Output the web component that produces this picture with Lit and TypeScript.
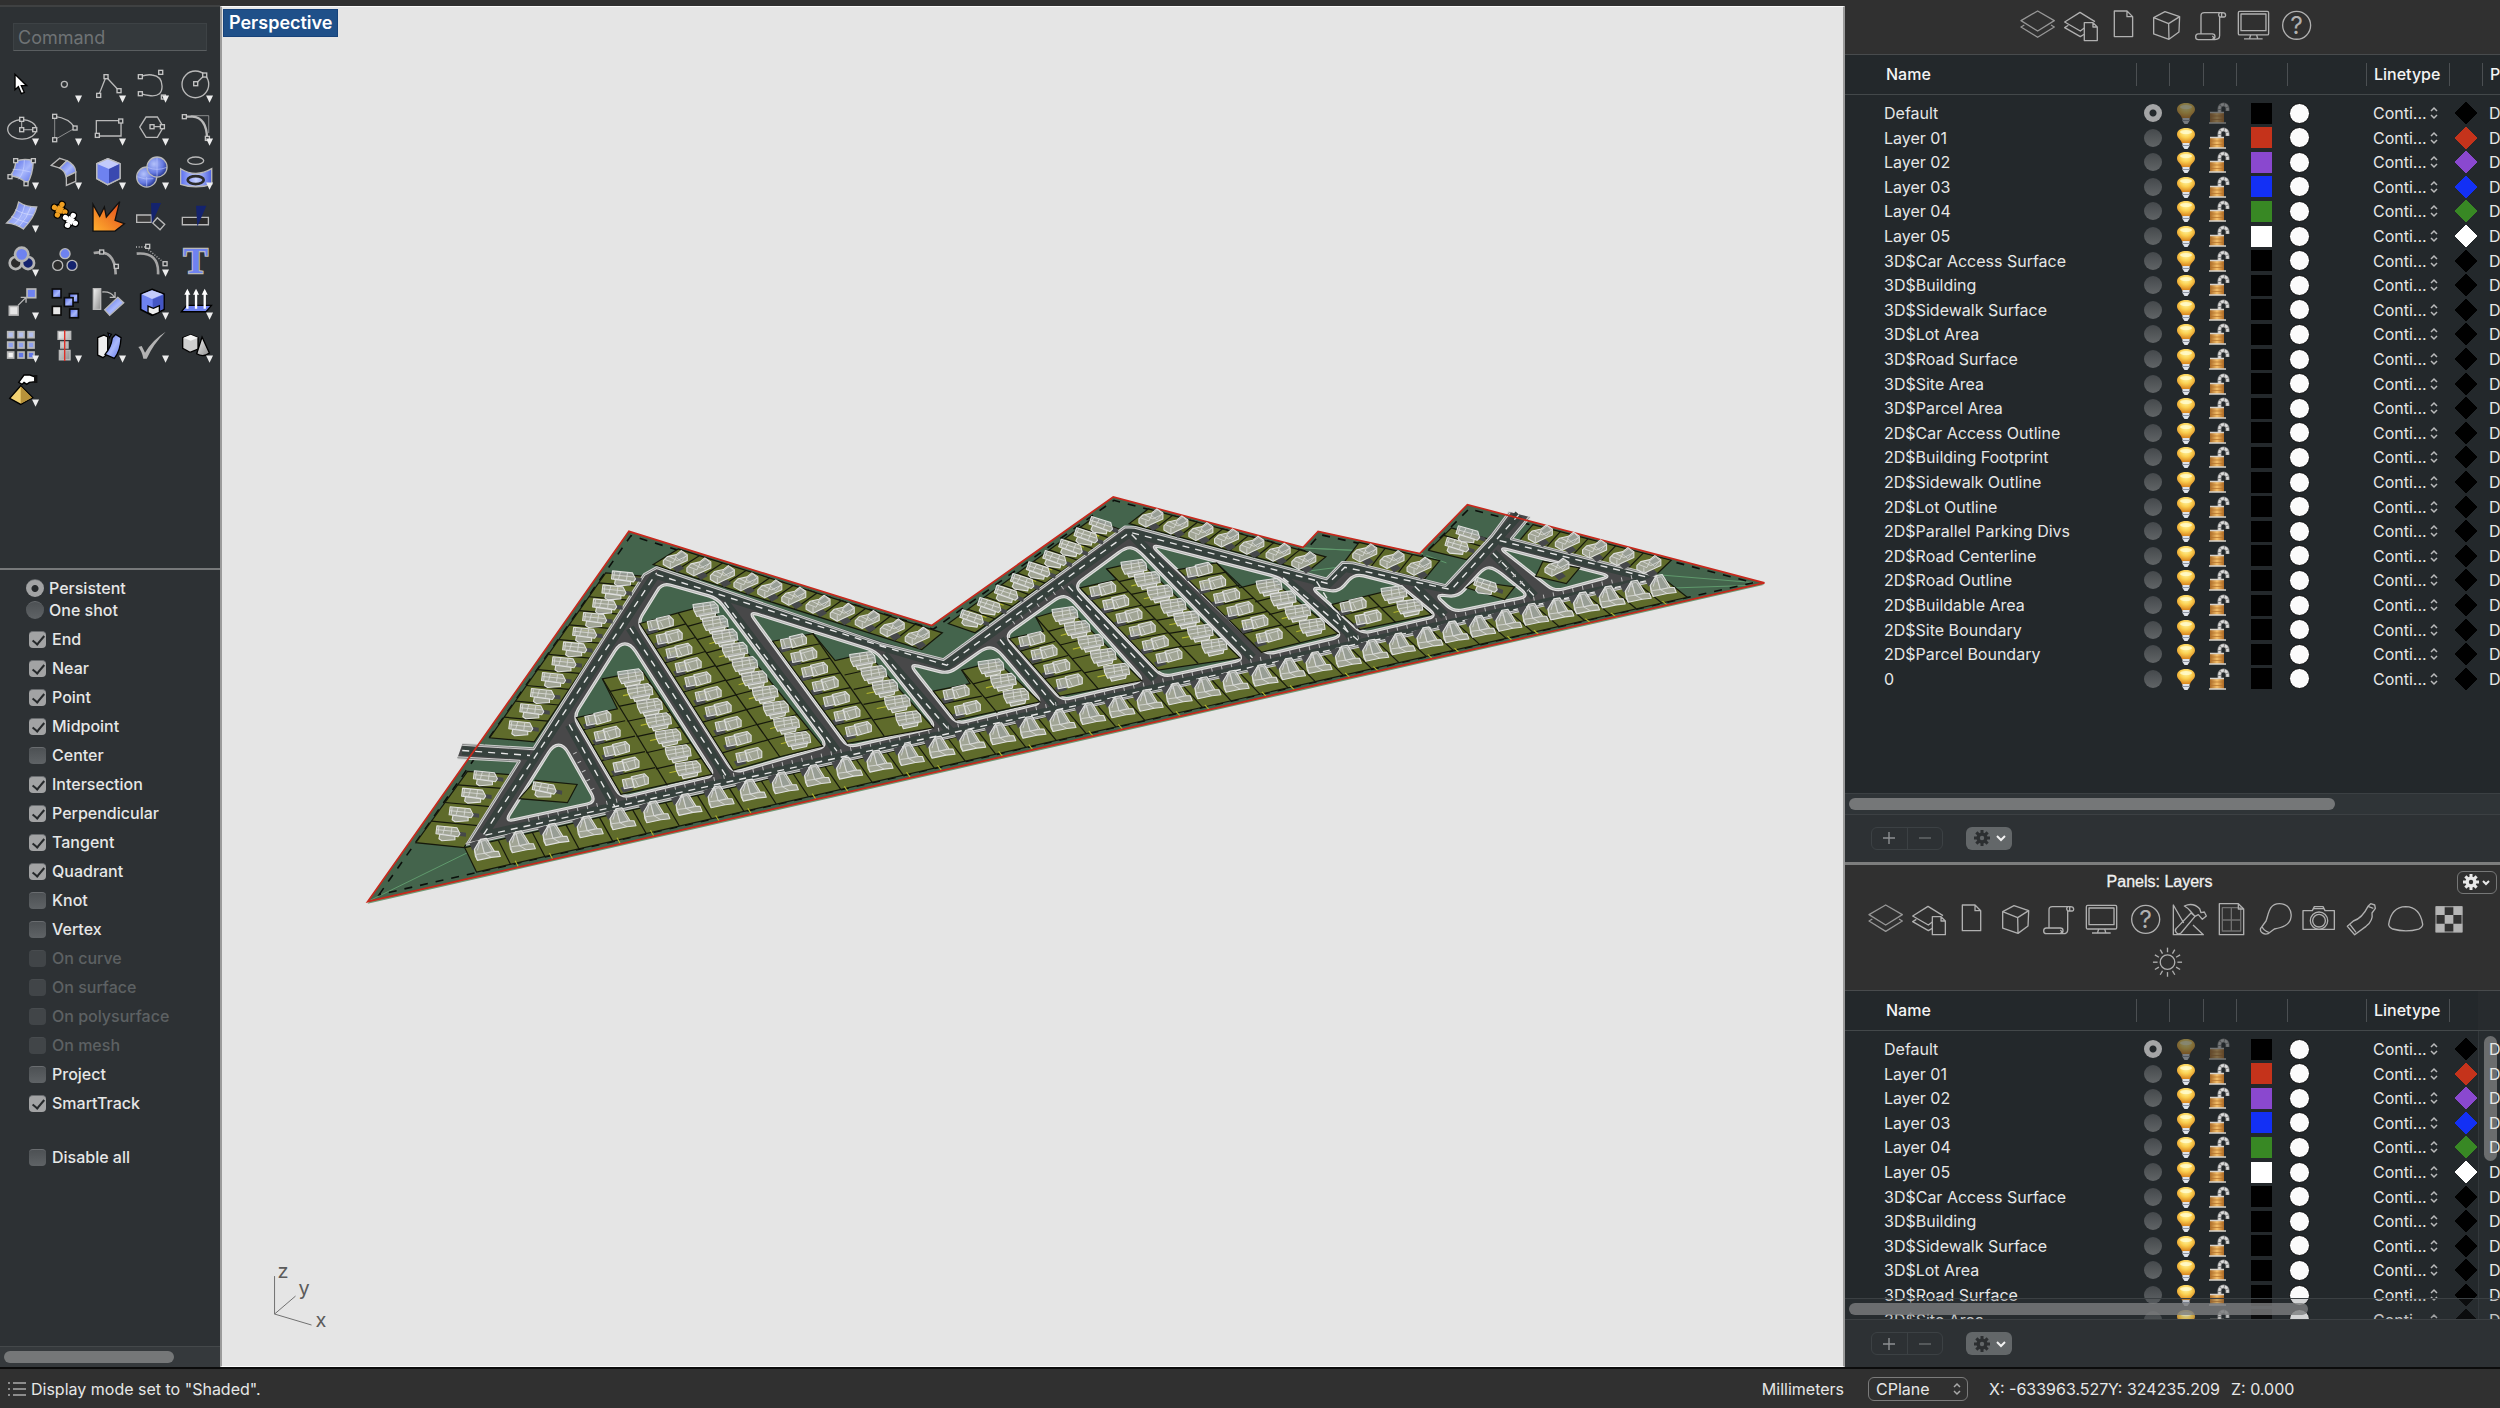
import { LitElement, html, svg, css } from "lit";
import { customElement, property } from "lit/decorators.js";

/* ---------- site plan geometry ---------- */

type Pt = [number, number];

// The plan is surveyed on three sheets, each with its own origin and scale.
const SHEETS: Record<string, [number, number, number, number]> = {
  w: [360, 480, 2.8, 3],
  m: [880, 480, 3, 3],
  e: [1300, 480, 3, 3],
};

function pts(source: string): Pt[] {
  let sheet = SHEETS.w;
  return source.trim().split(/\s+/).map((token) => {
    if (SHEETS[token[0]]) {
      sheet = SHEETS[token[0]];
      token = token.slice(1);
    }
    const [x, y] = token.split(",").map(Number);
    return [sheet[0] + x / sheet[2], sheet[1] + y / sheet[3]] as Pt;
  });
}

const fmt = (p: Pt) => `${p[0].toFixed(1)},${p[1].toFixed(1)}`;
const poly = (source: string) => pts(source).map(fmt).join(" ");

function rounded(source: string, radius: number): string {
  const p = pts(source);
  let d = "";
  p.forEach((cur, i) => {
    const prev = p[(i + p.length - 1) % p.length];
    const next = p[(i + 1) % p.length];
    const toward = (t: Pt): Pt => {
      const len = Math.hypot(t[0] - cur[0], t[1] - cur[1]);
      const k = Math.min(radius, len / 2) / len;
      return [cur[0] + (t[0] - cur[0]) * k, cur[1] + (t[1] - cur[1]) * k];
    };
    d += `${i ? "L" : "M"}${fmt(toward(prev))} Q${fmt(cur)} ${fmt(toward(next))} `;
  });
  return d + "Z";
}

interface Row {
  kind: string;
  at: string;
  edges?: string; // outer start, outer end, inner start, inner end
  turn?: number;
}

const BOUNDARY = "w20,1267 752,155 m155,438 700,52 1270,203 1315,155 e360,222 503,75 1395,310";
const SETBACK = "w52,1246 758,168 m160,449 702,62 1276,214 1320,165 e364,233 508,88 1362,309";
const ROADS =
  "w295,1095 445,845 272,835 285,795 485,808 795,285 830,264 m0,492 190,540 735,142 765,143 1340,298 1388,248 e160,250 438,318 630,97 690,112 635,178 1075,290 1090,298";
const CURBS = [
  "w272,835 445,845 300,1092",
  "w285,795 485,808 795,285 830,264 m0,492 190,540 735,142 765,143 1340,298 1388,248 e160,250 438,318 575,170 630,97",
  "e690,112 635,178 1075,290",
  "w295,1095 e1090,298",
];
const ISLANDS = [
  "w540,797 570,797 660,968 405,1027",
  "w725,493 757,493 993,888 730,955 597,712",
  "w845,310 1000,356 1308,800 1045,880 776,430",
  "w1088,396 1445,516 m168,743 w1365,803",
  "m88,553 205,583 318,503 350,508 487,670 230,733",
  "m375,468 540,350 568,353 793,604 545,662",
  "m583,318 738,203 768,206 1093,540 848,592",
  "m812,195 1200,294 1388,470 1160,525",
  "e33,322 115,338 165,282 300,317 412,410 188,462",
  "e406,345 475,352 555,263 585,266 688,350 462,397",
  "e597,203 935,290 765,335",
];
const LOTS = [
  "w687,280 795,290 487,787 362,775",
  "w300,876 420,886 290,1105 155,1090",
  "w890,208 m187,460 125,510 w820,255",
  "m635,118 722,150 285,460 205,432",
  "m805,88 1338,232 1285,275 748,132",
  "e178,188 420,243 375,298 135,245",
  "e455,145 570,180 500,240 387,212",
  "e700,135 1115,242 1065,290 660,182",
  "w325,1178 e1163,353 1090,295 w292,1105",
  "w490,903 607,915 580,970 445,958",
  "w678,598 790,575 985,885 730,945 605,715 720,688",
  "w890,400 975,375 1295,800 1175,832 1045,872 783,432",
  "w1155,485 1268,462 1330,543 1420,520 m160,745 w1365,792",
  "m160,635 270,612 245,572 350,545 480,667 228,722",
  "m388,477 490,455 468,413 565,385 785,603 540,650",
  "m600,325 710,300 680,268 780,245 1080,535 835,572",
  "m895,270 1010,250 1080,325 1175,300 1375,462 1145,518",
  "e95,375 300,325 395,405 180,450",
  "e525,305 645,322 615,360 500,325",
  "e730,245 840,265 800,312 708,290",
];
const PARTITIONS = [
  "w678,598 860,918", "w890,400 1175,832", "w1268,462 m12,770", "m245,572 352,700",
  "m468,413 655,628", "m680,268 955,552", "m1010,250 1262,490", "e205,347 287,428",
];
const ROWS: Row[] = [
  { kind: "slab", at: "w737,295 710,337 684,379 656,420 628,464 600,508 570,553 541,600 510,648 480,694 449,745", edges: "w687,280 362,775 795,290 487,787" },
  { kind: "slab", at: "w350,895 317,947 282,1003 245,1060", edges: "w300,876 155,1090 420,886 290,1105" },
  { kind: "villa", at: "w882,240 948,262 1014,285 1080,307 1147,328 1214,350 1282,374 1350,398 1420,420 1490,445 1560,470", edges: "w890,208 m187,460 w820,255 m125,510" },
  { kind: "slab", turn: 12, at: "m663,138 618,172 572,206 524,240 475,274 427,309 379,344 328,381 275,418", edges: "m635,118 205,432 722,150 285,460" },
  { kind: "villa", at: "m813,115 888,136 963,156 1040,175 1116,197 1195,218 1272,243", edges: "m805,88 1338,232 748,132 1285,275" },
  { kind: "villa", at: "e195,220 277,240 358,260", edges: "e178,188 420,243 135,245 375,298" },
  { kind: "slab", turn: 10, at: "e505,165 472,200", edges: "e455,145 387,212 570,180 500,240" },
  { kind: "villa", at: "e722,163 803,185 885,208 967,231 1048,255", edges: "e700,135 1115,242 660,182 1065,290" },
  { kind: "gable", at: "w350,1110 448,1087 542,1065 638,1042 730,1018 825,997 915,975 1005,952 1095,932 1185,910 1275,888 1365,866 1450,845 m88,825 180,803 272,782 362,763 453,743 543,723 632,702 720,682 805,662 892,643 978,625 1063,605 1150,587 1232,568 e52,549 140,530 222,512 302,493 385,475 463,457 543,440 622,422 702,404 778,388 855,370 932,352 1010,335 1085,318", edges: "w325,1178 e1163,353 w292,1105 e1090,295" },
  { kind: "slab", at: "w515,930", turn: 4 },
  { kind: "wide", at: "w757,592 783,636 810,680 835,724 862,772 890,820 918,868", edges: "w678,598 855,918 790,575 985,885" },
  { kind: "step", at: "w665,717 691,764 717,810 744,857 770,907", edges: "w605,715 730,945 720,688 858,918" },
  { kind: "wide", at: "w968,390 994,432 1021,472 1049,512 1077,555 1104,598 1134,642 1164,688 1194,734 1225,780", edges: "w890,400 1175,832 975,375 1295,800" },
  { kind: "step", at: "w840,432 865,473 892,515 918,558 945,601 974,645 1002,690 1030,735 1058,780 1088,828", edges: "w783,432 1045,872 890,400 1175,832" },
  { kind: "step", at: "w1213,487 1242,528 1272,572 1302,615 1333,660 1363,704 1395,750", edges: "w1155,485 1365,792 1268,462 m12,770" },
  { kind: "wide", at: "w1407,540 1438,582 1470,624 m52,670 85,718", edges: "w1330,543 m12,770 w1420,520 m160,745" },
  { kind: "step", at: "m228,640 262,687", edges: "m160,635 228,722 270,612 352,700" },
  { kind: "wide", at: "m333,562 370,605 408,650", edges: "m245,572 352,700 350,545 480,667" },
  { kind: "step", at: "m455,480 492,520 530,563 568,607", edges: "m388,477 540,650 490,445 655,628" },
  { kind: "wide", at: "m555,405 592,447 632,488 670,530 710,575", edges: "m468,413 655,628 565,385 785,603" },
  { kind: "step", at: "m668,330 707,370 747,410 787,450 826,492 867,530", edges: "m600,325 835,572 710,300 955,552" },
  { kind: "wide", at: "m762,263 802,300 840,340 880,380 920,418 961,458 1003,500", edges: "m680,268 955,552 780,245 1080,535" },
  { kind: "step", at: "m958,272 998,312 1040,350 1080,390 1125,430 1168,470", edges: "m895,270 1145,518 1010,250 1262,490" },
  { kind: "wide", at: "m1168,320 1210,358 1254,398 1297,440", edges: "m1080,325 1262,490 1175,300 1375,462" },
  { kind: "step", at: "e160,377 205,415", edges: "e95,375 180,450 205,347 287,428" },
  { kind: "wide", at: "e283,342 330,382", edges: "e205,347 287,428 300,325 395,405" },
  { kind: "slab", turn: 12, at: "e558,320" },
  { kind: "villa", at: "e772,263" },
];
const CENTERLINES = [
  "w345,1065 830,280", "w285,813 475,828", "w830,285 m5,500 200,557 750,158 1345,312 1395,263 e455,330 658,105",
  "e600,183 1060,297", "w350,1067 e1060,299", "w585,735 712,980", "w755,445 1028,895", "w1020,368 1335,815",
  "w1465,525 m210,755", "m360,480 525,680", "m565,320 825,598", "m755,165 1118,535", "m1210,295 1435,482",
  "e50,305 155,475", "e345,320 435,408", "e580,220 705,350",
];
const GUIDES = ["w20,1267 300,1120", "w430,1035 1500,570", "e1080,286 1362,309", "e1130,325 1340,318", "m1265,205 1440,213", "m1200,285 1440,255", "m380,470 620,370", "e5,205 370,222", "e380,228 440,250"];

function dividers(row: Row) {
  if (!row.edges) return [];
  const [p0, p1, q0, q1] = pts(row.edges);
  const c0 = [(p0[0] + q0[0]) / 2, (p0[1] + q0[1]) / 2];
  const c1 = [(p1[0] + q1[0]) / 2, (p1[1] + q1[1]) / 2];
  const dx = c1[0] - c0[0];
  const dy = c1[1] - c0[1];
  const at = pts(row.at);
  const lerp = (a: Pt, b: Pt, t: number): Pt => [a[0] + (b[0] - a[0]) * t, a[1] + (b[1] - a[1]) * t];
  return at.slice(1).map((b, i) => {
    const a = at[i];
    const t = (((a[0] + b[0]) / 2 - c0[0]) * dx + ((a[1] + b[1]) / 2 - c0[1]) * dy) / (dx * dx + dy * dy);
    return [lerp(p0, p1, t), lerp(q0, q1, t)];
  });
}

const houseDefs = svg`
  <g id="slab" class="house">
    <path class="pave" d="M11-1l7 1v4l-8-1z"/>
    <path d="M-8 1l-1 5 3 2 13-1v-4z"/>
    <path d="M-11-7l20 2 3 6-2 3-22-3z"/>
    <path class="ridge" d="M-11-3l21 2M-9-6l-1 7M-3-6l-2 7M4-5l-1 7"/>
  </g>
  <g id="villa" class="house">
    <path class="pave" d="M-3 8l8-3 4 4-7 4z"/>
    <path d="M-12 1l4-4 9-2 5-4 6 4v6L1 6l-6 3-7-4z"/>
    <path class="roof" d="M0-3l7-5 4 4-5 6z"/>
    <path class="ridge" d="M-10 0l8 3M-6-3l8 4 10-5M-5 3v5M-2 3l3-6"/>
  </g>
  <g id="gable" class="house">
    <path class="pave" d="M-16-6l8-3 3 6-8 4z"/>
    <path d="M-11 0L-5-10 1-11 9 2 13 2 15 7 6 8-8 11-10 7z"/>
    <path class="roof" d="M-4-8L0-9 7 2-1 4z"/>
    <path class="ridge" d="M-5-10L-1 4 9 2M-11 0L-8 11M-9 5L-1 4 6 8M-5-10L-8 1"/>
  </g>
  <g id="wide" class="house">
    <path d="M-7 5l2 5 14-3 1-5z"/>
    <path d="M-13-5l21-3 4 4 1 7-22 4-3-6z"/>
    <path class="ridge" d="M-12-2L9-5M-11 2l22-4M-3-6l1 9M4-7l2 9"/>
  </g>
  <g id="step" class="house">
    <path class="pave" d="M-15 6l10-3 3 5-10 3z"/>
    <path d="M-13-2l10-2 2 9-10 2z"/>
    <path d="M-4-5L9-8l4 4v6L-1 6z"/>
    <path class="ridge" d="M-3-2l14-4M-10-2l2 7M0-2l3 6M8-7l2 10"/>
  </g>`;

@customElement("site-view")
export class SiteView extends LitElement {
  static styles = css`
    :host { display: block; min-width: 0; min-height: 0; overflow: hidden; }
    .plan { display: block; width: 100%; height: 100%; }
    .axis { font: 20px Inter, "Liberation Sans", sans-serif; fill: #5b5b5b; }
    .house path { fill: rgba(178, 180, 176, 0.8); stroke: #e0e1df; stroke-width: 1.1; stroke-linejoin: round; }
    .house .ridge { fill: none; stroke: #dcdddb; stroke-width: 0.8; }
    .house .roof { fill: #989e95; stroke: #d0d1cf; stroke-width: 0.8; }
    .house .pave { fill: #46484a; stroke: none; }
  `;
  render() {
    const lines = ROWS.flatMap(dividers);
    return html`<svg class="plan" viewBox="223 7 1619 1360" preserveAspectRatio="xMidYMid meet" role="img" aria-label="Perspective">
      <defs>${houseDefs}</defs>
      <polygon points=${poly(BOUNDARY)} transform="translate(0 2)" fill="#6f9a75"/>
      <polygon points=${poly(BOUNDARY)} fill="#44644c"/>
      <g fill="none" stroke="#5f9a6c" stroke-width="1">${GUIDES.map((g) => svg`<polyline points=${poly(g)}/>`)}</g>
      <polygon points=${poly(SETBACK)} fill="none" stroke="#0b0f0b" stroke-width="1.6" stroke-dasharray="8 8"/>
      <polygon points=${poly(ROADS)} fill="#484849"/>
      <g fill="none" stroke="#36413d" stroke-width="9">${CENTERLINES.map((c) => svg`<polyline points=${poly(c)}/>`)}</g>
      ${ISLANDS.map((i) => svg`<path d=${rounded(i, 9)} fill="#44644c" stroke="#dededd" stroke-width="3.2"/><path d=${rounded(i, 9)} fill="none" stroke="#a9aaa9" stroke-width="0.8"/>`)}
      <g fill="#5f6b2b" stroke="#15180c" stroke-width="1.2">${LOTS.map((l) => svg`<polygon points=${poly(l)}/>`)}</g>
      <g fill="none" stroke="#15180c" stroke-width="1.2">
        ${PARTITIONS.map((p) => svg`<polyline points=${poly(p)}/>`)}
        ${lines.map(([a, b]) => svg`<path d="M${fmt(a)} L${fmt(b)}"/>`)}
      </g>
      <g stroke="#b3b52e" stroke-width="1.1">
        ${lines.filter((_, i) => i % 3 !== 1).map(([a, b]) => svg`<path transform="translate(9 5)" d="M${fmt([a[0] * 0.65 + b[0] * 0.35, a[1] * 0.65 + b[1] * 0.35])} L${fmt([a[0] * 0.9 + b[0] * 0.1, a[1] * 0.9 + b[1] * 0.1])}"/>`)}
      </g>
      <g fill="none" stroke-linejoin="round">
        ${CURBS.map((c) => svg`<polyline points=${poly(c)} stroke="#d0d1d0" stroke-width="2.8"/><polyline points=${poly(c)} stroke="#858686" stroke-width="1"/>`)}
      </g>
      <g fill="none" stroke="#e6e6e6" stroke-width="1.4" stroke-dasharray="7 6">${CENTERLINES.map((c) => svg`<polyline points=${poly(c)}/>`)}</g>
      <g fill="none" stroke="#bcbcbc" stroke-width="4" stroke-dasharray="1 9">
        <polyline points=${poly("w470,1022 e1000,292")}/>
        <polyline points=${poly("w600,820 660,950")}/>
        <polyline points=${poly("e600,245 690,335")}/>
        <polyline points=${poly("m400,430 560,315")}/>
      </g>
      <polygon points=${poly(BOUNDARY)} fill="none" stroke="#c8281c" stroke-width="1.7"/>
      ${ROWS.map((r) => pts(r.at).map((p) => svg`<use href="#${r.kind}" transform="translate(${fmt(p)}) rotate(${r.turn ?? 0})"/>`))}
      <path d="M274 1277v38l37 11M274 1315l21-18" fill="none" stroke="#707070"/>
      <text class="axis" x="277" y="1279">z</text>
      <text class="axis" x="298" y="1296">y</text>
      <text class="axis" x="315" y="1328">x</text>
    </svg>`;
  }
}

/* ---------- modelling tool palette ---------- */

const grip = (x: number, y: number) => svg`<rect x=${x - 6} y=${y - 6} width="12" height="12" fill="#2d3134" stroke="#c4c4c4" stroke-width="4"/>`;
const tile = (x: number, y: number, fill: string, edge = "#b9b9b9", s = 26) =>
  svg`<rect x=${x - s / 2} y=${y - s / 2} width=${s} height=${s} fill=${fill} stroke=${edge} stroke-width="5"/>`;

// A jigsaw piece: the black silhouette first, then the coloured body on top.
const lobes = () => svg`<rect x="-10" y="-10" width="20" height="20"/><circle cx="-17" r="8"/><circle cx="17" r="8"/><circle cy="-17" r="8"/><circle cy="17" r="8"/>`;
const jigsaw = (place: string, fill: string) => svg`<g transform=${place}>
  <g fill="#000" stroke="#000" stroke-width="7">${lobes()}</g>
  <g fill=${fill} stroke="none">${lobes()}</g></g>`;

interface Tool { label: string; more?: boolean; art: unknown; }
const TOOLS: Tool[] = [
  { label: "Select", art: svg`<path d="M45 34V80l10-9 9 21 9-4-9-20h16z" fill="#fff" stroke="#000" stroke-width="4"/>` },
  { label: "Point", more: true, art: svg`<circle cx="64" cy="64" r="9"/>` },
  { label: "Polyline", more: true, art: svg`<path d="M35 97L57 41l39 42"/>${grip(35, 97)}${grip(57, 41)}${grip(96, 83)}` },
  { label: "Curve", more: true, art: svg`<path d="M31 40Q54 33 66 36C84 38 96 50 96 70S86 100 62 98Q45 97 31 92"/>${grip(31, 41)}${grip(92, 28)}${grip(31, 92)}${grip(100, 102)}` },
  { label: "Circle", more: true, art: svg`<circle cx="64" cy="64" r="40"/><path d="M65 62l27-26"/>${grip(65, 62)}${grip(92, 36)}` },
  { label: "Ellipse", more: true, art: svg`<ellipse cx="66" cy="70" rx="43" ry="29"/><path d="M65 40v31h39" stroke-width="3"/>${grip(65, 40)}${grip(65, 71)}${grip(104, 71)}` },
  { label: "Arc", more: true, art: svg`<path d="M35 31Q78 36 96 66"/><path d="M96 66L35 101V31" stroke-width="2"/>${grip(35, 31)}${grip(96, 66)}${grip(35, 101)}` },
  { label: "Rectangle", more: true, art: svg`<path d="M28 44h74v46H28z"/>${grip(31, 88)}${grip(101, 45)}` },
  { label: "Polygon", more: true, art: svg`<path d="M29 63l19-30h34l18 30-18 31H48zM66 62h31"/>${grip(66, 62)}${grip(97, 62)}` },
  { label: "Fillet", more: true, art: svg`<path d="M50 29h54v52" stroke-width="2"/><path d="M31 32H55C85 34 98 55 99 97" stroke-width="7"/>${grip(31, 32)}${grip(100, 97)}` },
  { label: "Surface", more: true, art: svg`<path d="M47 34Q70 24 100 32Q98 75 82 100Q55 78 30 78Q46 60 47 34z" fill="url(#blue)"/><path d="M38 58q26 0 54 8M73 30q0 40-18 58" stroke="#c9d2ff" stroke-width="2"/>${grip(47, 32)}${grip(100, 32)}${grip(30, 80)}${grip(78, 101)}` },
  { label: "Sweep", more: true, art: svg`<path d="M25 46L50 25l22 7-22 22z" fill="#2d2d2d"/><path d="M50 54l22-22Q98 45 98 66L69 80Q66 62 50 54z" fill="url(#blue)"/><path d="M98 66v28L70 106V80z" fill="#2d2d2d"/>` },
  { label: "Box", more: true, art: svg`<path d="M62 26l37 15v45l-37 18-33-18V41z" fill="#6e82f0"/><path d="M62 26l37 15-33 16-37-16z" fill="#c3cbfb" stroke="none"/><path d="M66 57l33-16v45l-33 17z" fill="#3a49b0" stroke="none"/><path d="M62 26l37 15v45l-37 18-33-18V41z"/>` },
  { label: "Sphere", more: true, art: svg`<circle cx="50" cy="81" r="30" fill="url(#ball)"/><circle cx="81" cy="51" r="30" fill="url(#ball)"/><path d="M81 22v58M52 52q29 12 58 0M50 81v29M22 80q22 10 48 6" stroke="#b8c4ff" stroke-width="2"/>` },
  { label: "Revolve", more: true, art: svg`<ellipse cx="65" cy="32" rx="24" ry="11"/><path d="M20 56Q65 84 113 56V103Q65 118 20 103z" fill="url(#blueh)"/><ellipse cx="65" cy="90" rx="24" ry="12" stroke="#2b2b2b" stroke-width="8"/>` },
  { label: "Deform", more: true, art: svg`<path d="M56 27Q78 42 110 42Q104 70 70 108Q48 92 20 90Q48 65 56 27z" fill="url(#blue)"/><path d="M46 50q24 14 54 16M34 70q22 12 50 20M74 36q-8 38-32 58M92 42q-10 32-36 60" stroke="#d4dcff" stroke-width="2"/>` },
  { label: "Join", art: svg`${jigsaw("translate(50 50) rotate(24)", "#f0a022")}${jigsaw("translate(82 82) rotate(30)", "#fff")}` },
  { label: "Explode", art: svg`<path d="M18 114V34L38 70 52 42 58 72 98 26 84 82 112 92 84 114z" fill="url(#fire)" stroke="#111" stroke-width="4"/>` },
  { label: "Trim", art: svg`<path d="M20 66h44v22H20z" fill="#3a3a3a"/><path d="M82 74l22 20-14 16-22-20z"/><path d="M63 30h30L65 92z" fill="#14236e" stroke="none"/>` },
  { label: "Split", art: svg`<path d="M25 73h78v22H25z" fill="#2b2b2b"/><path d="M66 38h31L70 100z" fill="#14236e" stroke="none"/>` },
  { label: "Group", more: true, art: svg`<g stroke="#b4b4b4" stroke-width="8"><circle cx="47" cy="78" r="18" fill="#2b2b2b"/><circle cx="84" cy="78" r="18" fill="#14236e"/><circle cx="65" cy="52" r="20" fill="#6e82f0"/></g>` },
  { label: "Ungroup", art: svg`<circle cx="66" cy="50" r="15" fill="#6e82f0"/><circle cx="44" cy="85" r="15" fill="#2b2b2b"/><circle cx="87" cy="85" r="15" fill="#14236e"/>` },
  { label: "Edit points", art: svg`<path d="M20 48Q84 34 86 112" stroke-width="8" stroke="#a5a5a5"/>${grip(44, 45)}${grip(88, 88)}` },
  { label: "Control points", more: true, art: svg`<path d="M20 50Q88 44 84 112" stroke-width="8" stroke="#a5a5a5"/><path d="M18 30h28l52 44" stroke-dasharray="3 5"/>${grip(53, 28)}${grip(105, 80)}` },
  { label: "Text", art: svg`<text x="65" y="108" text-anchor="middle" class="serif" fill="#6e82f0" stroke="#b9b9b9" stroke-width="7" paint-order="stroke">T</text>` },
  { label: "Move", more: true, art: svg`<path d="M54 76L78 52M62 52h16v16"/>${tile(41, 92, "#e6e6e6")}${tile(94, 40, "#6e82f0")}` },
  { label: "Copy", art: svg`${tile(41, 40, "url(#blue)", "#0b0b0b")}${tile(92, 54, "url(#blue)", "#0b0b0b")}${tile(77, 66, "url(#blue)", "#0b0b0b")}${tile(41, 92, "#e6e6e6", "#0b0b0b")}${tile(93, 100, "url(#blue)", "#0b0b0b")}` },
  { label: "Rotate", art: svg`<path d="M19 26h22v62H19z" fill="url(#grey)"/><path d="M46 36Q72 34 82 52M84 36v16H68"/><path d="M92 52l18 16-42 38-15-17z" fill="url(#blue)"/>` },
  { label: "Solid tools", more: true, art: svg`<path d="M66 28l36 14v46l-36 18-34-18V42z" fill="#6e82f0" stroke="#000" stroke-width="5"/><path d="M66 31l33 12-33 14-31-14z" fill="#c3cbfb" stroke="none"/><path d="M68 58l32-14v42l-32 16z" fill="#4456c4" stroke="none"/><path d="M54 78l16 7 18-8v20l-20 8-14-7z" fill="#eee" stroke="#000" stroke-width="4"/>` },
  { label: "Project", more: true, art: svg`<path d="M38 76h74l-16 19H22z" fill="#6e82f0" stroke="#000" stroke-width="4"/><path d="M40 86V34M66 86V34M92 86V34" stroke="#fff" stroke-width="7"/><path d="M40 26l9 18H31zM66 26l9 18H57zM92 26l9 18H83z" fill="#fff" stroke="none"/>` },
  { label: "Array", more: true, art: svg`${[32, 63, 93].map((x, i) => [35, 66, 96].map((y, j) => tile(x, y, i === 0 && j === 2 ? "#f3f3f3" : j === 0 ? "#b3bfee" : j === 1 ? "#8ea0ee" : "#6278e8", "#b9b9b9", 18)))}` },
  { label: "Align", more: true, art: svg`<path d="M45 25h38v24H45zM53 57h22v18H53zM49 82h32v28H49z" fill="url(#grey)"/><path d="M65 22v92" stroke="#e02a22" stroke-width="4"/>` },
  { label: "Bend", more: true, art: svg`<path d="M32 44l18-8 12 6v50l-14 12-16-8z" fill="#eee" stroke="#000" stroke-width="4"/><path d="M63 30l10 4-6 10zM76 44l10-10 16 10q-2 40-20 62l-28-12q18-20 22-50z" fill="url(#blue)" stroke="#000" stroke-width="4"/>` },
  { label: "Check", more: true, art: svg`<path d="M25 72l10-3 10 20Q68 50 107 26Q70 62 50 107H40Q36 85 25 72z" fill="#b3b3b3" stroke="none"/>` },
  { label: "Mesh", more: true, art: svg`<path d="M50 35l22 9v34l-24 10-22-12V44z" fill="#cfcfcf" stroke="#000" stroke-width="4"/><path d="M28 44l22-9 22 9-22 9z" fill="#f5f5f5" stroke="none"/><path d="M84 42l22 48q-18 14-38 2z" fill="url(#grey)" stroke="#000" stroke-width="4"/>` },
  { label: "Render", more: true, art: svg`<path d="M56 46l16-22h18l16 6v14l-18 2-8 6-8-6-6 6z" fill="#fff" stroke="#000" stroke-width="4"/><path d="M102 24h10v24h-10z" fill="#111" stroke="none"/><path d="M62 56l36 36-36 20-33-18z" fill="#f2d272" stroke="#000" stroke-width="4"/><path d="M62 58l34 34-34 18z" fill="#b8923a" stroke="none"/>` },
];

@customElement("tool-palette")
export class ToolPalette extends LitElement {
  static styles = css`
    :host { display: block; }
    .grid { display: grid; grid-template-columns: repeat(5, 1fr); width: 217px; }
    .tool { padding: 0; border: 0; background: none; line-height: 0; }
    .art { display: block; width: 100%; fill: none; stroke: #b9b9b9; stroke-width: 4; }
    .serif { font: bold 110px "Liberation Serif", serif; }
  `;
  render() {
    return html`
      <div class="grid">
        ${TOOLS.map((t) => html`<button class="tool" aria-label=${t.label}>
          <svg class="art" viewBox="0 0 130 130">
            <defs>
              <linearGradient id="blue" x1="0" y1="0" x2="1" y2="1"><stop offset="0" stop-color="#4f66e6"/><stop offset=".55" stop-color="#a9b8fb"/><stop offset="1" stop-color="#5a70ea"/></linearGradient>
              <linearGradient id="blueh"><stop offset="0" stop-color="#5a6ef0"/><stop offset=".5" stop-color="#c7d2ff"/><stop offset="1" stop-color="#4a5ee0"/></linearGradient>
              <radialGradient id="ball" cx=".35" cy=".35" r=".75"><stop offset="0" stop-color="#b4c2fb"/><stop offset=".6" stop-color="#6478e0"/><stop offset="1" stop-color="#16267a"/></radialGradient>
              <linearGradient id="fire" x1="0" y1="1" x2="1" y2="0"><stop offset="0" stop-color="#ffb02e"/><stop offset="1" stop-color="#e0431a"/></linearGradient>
              <linearGradient id="grey" x1="0" y1="0" x2="1" y2="1"><stop offset="0" stop-color="#f4f4f4"/><stop offset="1" stop-color="#8d8d8d"/></linearGradient>
            </defs>
            ${t.art}
            ${t.more ? svg`<path d="M96 97h21l-10.500 22z" fill="#ececec" stroke="none"/>` : null}
          </svg>
        </button>`)}
      </div>`;
  }
}

/* ---------- layer table ---------- */

const LAYERS: [string, string][] = [
  ["Default", "#000000"], ["Layer 01", "#c5331b"], ["Layer 02", "#8a48cf"], ["Layer 03", "#1330f5"],
  ["Layer 04", "#388824"], ["Layer 05", "#ffffff"],
  ...[
    "3D$Car Access Surface", "3D$Building", "3D$Sidewalk Surface", "3D$Lot Area", "3D$Road Surface",
    "3D$Site Area", "3D$Parcel Area", "2D$Car Access Outline", "2D$Building Footprint",
    "2D$Sidewalk Outline", "2D$Lot Outline", "2D$Parallel Parking Divs", "2D$Road Centerline",
    "2D$Road Outline", "2D$Buildable Area", "2D$Site Boundary", "2D$Parcel Boundary", "0",
  ].map((n): [string, string] => [n, "#000000"]),
];

@customElement("layer-table")
export class LayerTable extends LitElement {
  @property({ type: Boolean }) tall = false;
  @property({ type: Number }) rows = LAYERS.length;
  static styles = css`
    :host { display: flex; flex-direction: column; flex: 1; min-height: 0; overflow: hidden; position: relative; z-index: 0; background: #23282b; font: 16px/20px Inter, "Liberation Sans", sans-serif; color: #e6e7e7; }
    table { border-collapse: collapse; table-layout: fixed; width: 100%; }
    .c-name { width: 291px; } .c-a { width: 33px; } .c-b { width: 34px; } .c-color { width: 51px; } .c-mat { width: 79px; } .c-line { width: 83px; }
    th { position: relative; height: 39px; padding: 0; text-align: left; font-weight: 500; color: #f4f4f4; white-space: nowrap; }
    thead { border-bottom: 1px solid #43484a; }
    th.name { padding-left: 41px; }
    th.pad { padding-left: 8px; }
    th + th::before { content: ""; position: absolute; left: 0; top: 8px; bottom: 8px; width: 1px; background: #4b4f52; }
    .gap td { height: 6px; }
    td { padding: 0; overflow: visible; white-space: nowrap; vertical-align: middle; }
    .row td { height: 25px; }
    .row:nth-child(5n + 2) td, .row:nth-child(5n + 4) td { height: 24px; }
    td.name { padding-left: 39px; }
    .cell { display: flex; justify-content: center; align-items: center; height: 20px; }
    .cell.swatch { justify-content: flex-start; padding-left: 15px; }
    .cell.mat { justify-content: flex-start; padding-left: 2px; }
    .cell.lock { padding-right: 2px; }
    .pick { appearance: none; width: 18px; height: 18px; margin: 0; border-radius: 50%; background: linear-gradient(#45494c, #606466); }
    .pick:checked { background: radial-gradient(circle, #23282b 0 3px, #a4a5a6 4px); }
    .icon { padding: 0; border: 0; background: none; line-height: 0; }
    .dim { opacity: 0.45; }
    .chip { width: 21px; height: 21px; padding: 0; border: 0; }
    .dot { width: 21px; height: 21px; padding: 0; border: 1px solid #0b0c0d; border-radius: 50%; background: #fbfbfb; }
    .line { display: grid; align-items: center; width: 68px; margin-left: 7px; height: 20px; }
    .line > * { grid-area: 1 / 1; }
    .line select { appearance: none; border: 0; padding: 0; margin: 0; background: none; color: inherit; font: inherit; width: 100%; }
    .line svg { justify-self: end; pointer-events: none; margin-right: 3px; }
    td.print { padding-left: 7px; }
    .scroller { position: absolute; z-index: -1; right: 0; top: 40px; bottom: 0; width: 21px; background: #272c2f; border-left: 1px solid #33383b; }
    .vthumb { width: 13px; height: 125px; margin: 5px 0 0 5px; border-radius: 7px; background: #6b6d6e; }
    .corner { position: absolute; z-index: -1; right: 0; top: 0; width: 22px; height: 40px; background: #272b2e; }
  `;
  render() {
    return html`
      <table>
        <colgroup><col class="c-name"><col class="c-a"><col class="c-b"><col class="c-a"><col class="c-color"><col class="c-mat"><col class="c-line"><col class="c-a"><col></colgroup>
        <thead><tr><th class="name">Name</th><th></th><th></th><th></th><th></th><th></th><th class="pad">Linetype</th><th></th>${this.tall ? html`<td></td>` : html`<th class="pad">P</th>`}</tr></thead>
        <tbody><tr class="gap"><td></td></tr></tbody>
        <tbody>
          ${LAYERS.slice(0, this.rows).map(([name, color], i) => html`<tr class="row">
            <td class="name">${name}</td>
            <td><div class="cell"><input class="pick" type="radio" name="current" aria-label=${name} ?checked=${i === 0}></div></td>
            <td><div class="cell"><button class="icon ${i ? "" : "dim"}" aria-label="On">
              <svg width="20" height="22" viewBox="0 0 20 22">
                <defs><radialGradient id="glow" cx=".5" cy=".3" r=".65"><stop offset="0" stop-color="#fff6a6"/><stop offset=".5" stop-color="#fbd051"/><stop offset="1" stop-color="#dc8a22"/></radialGradient></defs>
                <path d="M10 1c5.500 0 9 2.500 9 6.500 0 4-4.500 5-5 9H6c-.5-4-5-5-5-9C1 3.500 4.500 1 10 1z" fill="url(#glow)"/>
                <ellipse cx="10" cy="5" rx="6" ry="2" fill="#fffbd0" opacity=".8"/>
                <path d="M6.500 16h7v3l-2 3h-3l-2-3z" fill="#dfe3ea"/><path d="M6.500 18.500h7" stroke="#8d93a0"/>
              </svg></button></div></td>
            <td><div class="cell lock"><button class="icon ${i ? "" : "dim"}" aria-label="Unlocked">
              <svg width="22" height="22" viewBox="0 0 22 22">
                <defs><linearGradient id="brass"><stop offset="0" stop-color="#a86a28"/><stop offset=".5" stop-color="#f5bf6a"/><stop offset="1" stop-color="#b06a22"/></linearGradient></defs>
                <path d="M11.500 11V6.500a4 4 0 0 1 8 0V9" fill="none" stroke="#8b8b8b" stroke-width="4"/>
                <path d="M11.500 11V6.500a4 4 0 0 1 8 0V9" fill="none" stroke="#dcdcdc" stroke-width="2.500" stroke-dasharray="3 1"/>
                <path d="M2 10h14v11H2z" fill="url(#brass)"/><path d="M2 10.500h14M1 21h17" stroke="#d9d4cc" stroke-width="1.500"/><path d="M2 14h14M2 17.500h14" stroke="#b5732c" stroke-width=".7"/>
              </svg></button></div></td>
            <td><div class="cell swatch"><button class="chip" aria-label="Color" style="background:${color}"></button></div></td>
            <td><div class="cell mat"><button class="dot" aria-label="Material"></button></div></td>
            <td><div class="line"><select aria-label="Linetype"><option>Conti...</option></select>
              <svg width="8" height="14" viewBox="0 0 8 14" fill="none" stroke="#b9babb" stroke-width="1.500"><path d="M1 5l3-3 3 3M1 9l3 3 3-3"/></svg></div></td>
            <td><div class="cell"><button class="icon" aria-label="Print color"><svg width="24" height="24" viewBox="0 0 24 24"><path d="M12 1l11 11-11 11L1 12z" fill=${color} stroke=${color} stroke-linejoin="round"/></svg></button></div></td>
            <td class="print">D</td>
          </tr>`)}
        </tbody>
      </table>
      ${this.tall ? html`<div class="corner"></div><div class="scroller"><div class="vthumb"></div></div>` : null}`;
  }
}

/* ---------- panel tab icons ---------- */

const TABS: [string, unknown][] = [
  ["Layers", svg`<g opacity=".8"><path d="M15 41l50-29 50 29-50 31z"/><path d="M25 54l-10 6 50 31 50-31-10-6"/></g>`],
  ["Layer states", svg`<path d="M76 63l-12 9-47-27 46-29 45 28M28 55l-11 7 47 27 12-7"/><path d="M76 47h26l13 13v41H76zM102 47v13h13"/>`],
  ["Properties", svg`<path d="M37 12h38l17 17v60H37zM75 12v17h17"/>`],
  ["Blocks", svg`<path d="M26 32l34-18 44 15-2 46-30 22-46-16zM26 32l45 18 33-21M71 50l1 47"/>`],
  ["Notes", svg`<path d="M36 80V26q0-9 10-9h54q10 0 10 8 0 5-4 5H92v56q0 12-14 12H28q-8 0-8-8 0-9 8-9h44M98 29V18M92 30q-6-8 0-12M70 81q8 0 8 8t-8 8q8-4 0-10"/>`],
  ["Display", svg`<rect x="19" y="13" width="91" height="71" rx="4"/><rect x="27" y="21" width="75" height="50"/><path d="M56 84l-3 10M74 84l3 10M36 96h56"/>`],
  ["Help", svg`<circle cx="65" cy="55" r="42"/><text class="q" x="65" y="82" text-anchor="middle">?</text>`],
  ["Tools", svg`<path d="M50 66L19 12v89h90L78 72"/><path d="M28 82l44-46 12 10-42 50q-8 6-14-1-6-7 0-13zM52 15q26-12 46 8l4 12 10-2 6 12-12 10-12-14-10 5-14-16q-6-8-18-15z"/>`],
  ["Page layout", svg`<path d="M28 8h57l16 16v77H28zM85 8v16h16"/><g opacity=".5"><path d="M37 20h55v70H37zM64 20v70M37 57h55"/></g>`],
  ["Lights", svg`<path d="M36 60C44 40 44 8 76 8c26 0 38 20 35 40-3 26-30 32-50 36L42 98c-12 4-26-5-22-16zM24 76q4 12 20 18"/>`],
  ["Camera", svg`<path d="M18 29h28l6-12h26l6 12h28v56H18zM50 23h30"/><circle cx="66" cy="59" r="26"/><circle cx="66" cy="59" r="19"/>`],
  ["Materials", svg`<path d="M84 16l8-8 12 4 2 10-10 14q4 22-18 40L44 101 22 76 40 60Q66 52 84 16zM28 68l20 26M84 16l16 6"/>`],
  ["Environments", svg`<path d="M14 70Q22 18 65 17q43 1 51 53 0 9-12 14-38 11-78 0-12-5-12-14z"/>`],
  ["Textures", svg`<g fill="#b4b4b4" stroke="none"><path d="M26 16h27v26H26zM79 16h27v26H79zM53 42h26v26H53zM26 68h27v26H26zM79 68h27v26H79z"/></g><path d="M27 17h78v76H27z" stroke-width="3"/>`],
];
const SUN = svg`<circle cx="65" cy="55" r="22"/>${Array.from({ length: 12 }, (_, i) => svg`<path transform="rotate(${i * 30} 65 55)" d="M65 25V11"/>`)}`;
const tab = (label: string, art: unknown) => html`<button class="tab" aria-label=${label}><svg viewBox="0 0 130 110">${art}</svg></button>`;
const gear = (fill: string, hole: string) => svg`<g fill=${fill}>${Array.from({ length: 8 }, (_, i) => svg`<rect x="-1.500" y="-8" width="3" height="4" transform="rotate(${i * 45})"/>`)}<circle r="5.500"/></g><circle r="2.200" fill=${hole}/>`;

const SNAPS: [string, boolean, boolean?][] = [
  ["End", true], ["Near", true], ["Point", true], ["Midpoint", true], ["Center", false], ["Intersection", true],
  ["Perpendicular", true], ["Tangent", true], ["Quadrant", true], ["Knot", false], ["Vertex", false],
  ["On curve", false, true], ["On surface", false, true], ["On polysurface", false, true], ["On mesh", false, true],
  ["Project", false], ["SmartTrack", true],
];

@customElement("app-root")
export class AppRoot extends LitElement {
  static styles = css`
    :host { display: flex; flex-direction: column; height: 100vh; overflow: hidden; background: #303030; font: 16px/20px Inter, "Liberation Sans", sans-serif; color: #e6e7e7; }
    * { box-sizing: border-box; }
    .work { display: grid; grid-template-columns: 220px minmax(0, 1fr) 655px; flex: 1; min-height: 0; }
    .left { display: flex; flex-direction: column; min-height: 0; background: #2d3134; border-top: 5px solid #303030; }
    .tools { flex: 565 1 0; padding: 0; border-top: 2px solid #3f4142; }
    .command { display: block; width: 194px; height: 28px; margin: 16px 13px 12px; padding: 0 4px; border: 1px solid #3d4245; border-bottom: 1px solid #5a5e60; background: #34393c; color: #e6e7e7; font: 18px/26px Inter, "Liberation Sans", sans-serif; }
    .command::placeholder { color: #6f7375; opacity: 1; }
    .snaps { flex: 774 1 0; margin: 0; padding: 8px 0 0 26px; border: 0; border-top: 2px solid #77797a; font-weight: 500; }
    .once { display: flex; flex-direction: column; gap: 2px; margin-bottom: 5px; }
    .opt { display: flex; align-items: center; gap: 6px; height: 20px; }
    .checks { display: flex; flex-direction: column; padding-left: 3px; }
    .checks .opt { height: 29px; }
    .checks .last { margin-top: 25px; }
    .off { color: #5d6163; }
    .box, .dial { appearance: none; position: relative; width: 17px; height: 17px; margin: 0; border-radius: 4px; background: linear-gradient(#4d5154, #5f6366); border-top: 1px solid #6a6d70; }
    .dial { width: 18px; height: 18px; border-radius: 50%; margin-right: -1px; }
    .box:checked { background: #a2a3a4; }
    .box:disabled { background: #414548; border-color: #484c4f; }
    .box:checked::before { content: ""; position: absolute; left: 6px; top: 1px; width: 5px; height: 10px; border: solid #25282a; border-width: 0 2px 2px 0; transform: rotate(40deg); }
    .dial:checked { background: radial-gradient(circle, #25282a 0 3px, #a2a3a4 4px); }
    .hbar { display: flex; align-items: center; height: 22px; padding-left: 4px; background: #35393c; border-top: 1px solid #44484a; border-bottom: 1px solid #3c4043; }
    .left .hbar { height: 21px; border-bottom: 0; }
    .thumb { height: 12px; border-radius: 6px; background: #757778; }
    .stage { display: grid; min-height: 0; min-width: 0; margin-top: 6px; border: 1px solid #fafafa; border-left: 2px solid #9b9b9b; border-right: 2px solid #9a9a9a; background: #e5e5e5; }
    .stage > * { grid-area: 1 / 1; }
    .stage .title { justify-self: start; align-self: start; z-index: 1; margin: 2px 1px; padding: 0 5px; border: 1px solid #16427a; background: #1f5089; color: #fff; font: 600 18px/26px Inter, "Liberation Sans", sans-serif; }
    .right { display: flex; flex-direction: column; min-height: 0; background: #2d3134; }
    .upper { display: flex; flex-direction: column; flex: 863 1 0; min-height: 0; }
    .lower { display: flex; flex-direction: column; flex: 503 1 0; min-height: 0; border-top: 3px solid #7c7d7d; }
    .tabs { display: flex; flex-direction: column; align-items: center; padding: 7px 11px 10px 0; background: #303030; border-bottom: 1px solid #484b4d; }
    .tabs.second { padding: 1px 11px 5px 0; }
    .tabrow { display: grid; }
    .seven { width: 303px; grid-template-columns: repeat(7, 1fr); }
    .fourteen { width: 607px; grid-template-columns: repeat(14, 1fr); }
    .tab { padding: 0; border: 0; background: none; line-height: 0; width: 100%; }
    .single { width: 43px; margin-top: 7px; }
    .tab svg { display: block; width: 100%; fill: none; stroke: #b0b0b0; stroke-width: 4; stroke-linejoin: round; }
    .q { font: 74px Inter, "Liberation Sans", sans-serif; fill: #b0b0b0; stroke: none; }
    .caption { display: grid; grid-template-columns: 1fr auto 1fr; align-items: center; height: 35px; padding: 0 3px 0 5px; background: #303030; }
    .caption h2 { grid-column: 2; margin: 0 28px 0 0; font: 16px/20px "Liberation Sans", sans-serif; color: #f0f0f0; -webkit-text-stroke: 0.3px #f0f0f0; }
    .menu { justify-self: end; display: flex; align-items: center; justify-content: center; width: 40px; height: 23px; padding: 0; border: 1px solid #767777; border-radius: 6px; background: none; }
    .menu svg { flex: none; }
    .pane { display: flex; flex-direction: column; flex: 1; min-height: 0; position: relative; }
    .pane .hbar { background: #2f3437; border-top-color: #3b4043; }
    .pane .over { position: absolute; z-index: 1; left: 0; right: 0; bottom: 0; background: rgba(56, 62, 65, 0.2); }
    .over .thumb { background: rgba(125, 126, 127, 0.8); }
    .actions { display: flex; align-items: center; gap: 23px; height: 47px; padding-left: 26px; }
    .pair { display: flex; width: 72px; height: 23px; border: 1px solid #3c4144; border-radius: 6px; }
    .pair button { flex: 1; padding: 0; border: 0; background: none; line-height: 0; }
    .pair button + button { border-left: 1px solid #3c4144; }
    .gear { width: 46px; height: 23px; padding: 0; border: 0; border-radius: 6px; background: #636769; line-height: 0; }
    .status { display: flex; align-items: center; height: 41px; border-top: 2px solid #0c0c0c; background: #303030; }
    .status .list { margin: 0 5px 0 8px; }
    .units { margin-left: auto; }
    .plane { display: grid; align-items: center; width: 100px; height: 24px; margin: 0 21px 0 24px; }
    .plane > * { grid-area: 1 / 1; }
    .plane select { appearance: none; width: 100%; height: 24px; padding: 0 7px; border: 1px solid #7b7b7b; border-radius: 6px; background: none; color: inherit; font: inherit; }
    .plane svg { justify-self: end; margin-right: 7px; pointer-events: none; }
    .coords { display: grid; grid-template-columns: 119px 123px 1fr; width: 511px; white-space: nowrap; }
  `;

  private actions() {
    return html`<div class="actions">
      <div class="pair">
        <button aria-label="Add layer"><svg width="14" height="14" viewBox="0 0 14 14" stroke="#8d9092" stroke-width="1.400"><path d="M7 1v12M1 7h12"/></svg></button>
        <button aria-label="Remove layer"><svg width="14" height="14" viewBox="0 0 14 14" stroke="#686c6e" stroke-width="1.400"><path d="M1 7h12"/></svg></button>
      </div>
      <button class="gear" aria-label="Layer options"><svg width="40" height="20" viewBox="0 0 40 20"><g transform="translate(13 10)">${gear("#2c2f31", "#636769")}</g><path d="M28 8l4 4 4-4" fill="none" stroke="#f2f2f2" stroke-width="2"/></svg></button>
    </div>`;
  }

  render() {
    return html`
      <main class="work">
        <aside class="left">
          <section class="tools">
            <input class="command" type="text" placeholder="Command" aria-label="Command">
            <tool-palette></tool-palette>
          </section>
          <fieldset class="snaps">
            <div class="once">
              <label class="opt"><input class="dial" type="radio" name="mode" checked>Persistent</label>
              <label class="opt"><input class="dial" type="radio" name="mode">One shot</label>
            </div>
            <div class="checks">
              ${SNAPS.map(([name, on, off]) => html`<label class="opt ${off ? "off" : ""}"><input class="box" type="checkbox" ?checked=${on} ?disabled=${!!off}>${name}</label>`)}
              <label class="opt last"><input class="box" type="checkbox">Disable all</label>
            </div>
          </fieldset>
          <div class="hbar"><div class="thumb" style="width:170px"></div></div>
        </aside>
        <section class="stage">
          <site-view></site-view>
          <span class="title">Perspective</span>
        </section>
        <aside class="right">
          <section class="upper">
            <nav class="tabs"><div class="tabrow seven">${TABS.slice(0, 7).map(([l, a]) => tab(l, a))}</div></nav>
            <div class="pane">
              <layer-table></layer-table>
              <div class="hbar"><div class="thumb" style="width:486px"></div></div>
            </div>
            ${this.actions()}
          </section>
          <section class="lower">
            <header class="caption"><h2>Panels: Layers</h2>
              <button class="menu" aria-label="Panel options"><svg width="34" height="18" viewBox="0 0 34 18"><g transform="translate(11 9)">${gear("#e8e8e8", "#303030")}</g><path d="M23 8l3 3 3-3" fill="none" stroke="#e8e8e8" stroke-width="2"/></svg></button>
            </header>
            <nav class="tabs second">
              <div class="tabrow fourteen">${TABS.map(([l, a]) => tab(l, a))}</div>
              <div class="single">${tab("Sun", SUN)}</div>
            </nav>
            <div class="pane">
              <layer-table tall rows="12"></layer-table>
              <div class="hbar over"><div class="thumb" style="width:459px"></div></div>
            </div>
            ${this.actions()}
          </section>
        </aside>
      </main>
      <footer class="status">
        <svg class="list" width="18" height="16" viewBox="0 0 18 16" stroke="#a9a9a9" stroke-width="1.500"><path d="M5 2h13M5 8h13M5 14h13M0 2h2M0 8h2M0 14h2"/></svg>
        <span>Display mode set to "Shaded".</span>
        <span class="units">Millimeters</span>
        <div class="plane"><select aria-label="Construction plane"><option>CPlane</option></select>
          <svg width="8" height="14" viewBox="0 0 8 14" fill="none" stroke="#a9a9a9" stroke-width="1.500"><path d="M1 5l3-3 3 3M1 9l3 3 3-3"/></svg></div>
        <div class="coords"><span>X: -633963.527</span><span>Y: 324235.209</span><span>Z: 0.000</span></div>
      </footer>`;
  }
}
